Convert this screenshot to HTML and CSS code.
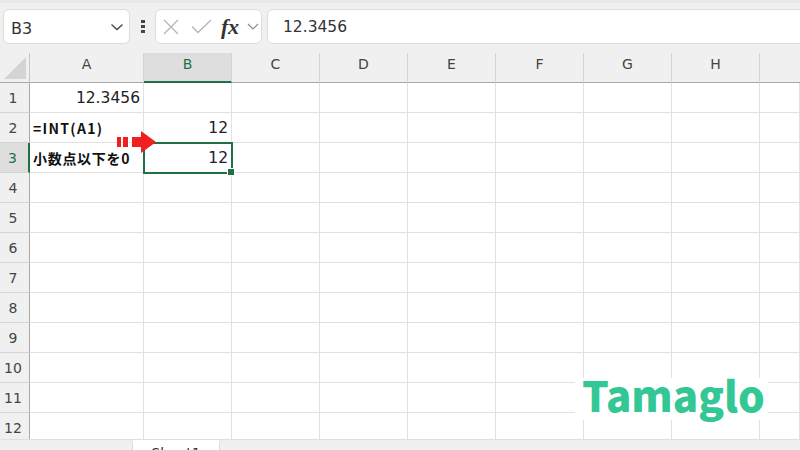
FILE: index.html
```html
<!DOCTYPE html>
<html lang="ja">
<head>
<meta charset="utf-8">
<title>Tamaglo</title>
<link rel="stylesheet" href="styles.css">
</head>
<body>
<div class="app">
  <div class="strip"></div>
  <div class="formula-bar">
    <div class="box name-box"><span class="name">B3</span>
      <svg class="chev" width="14" height="8" viewBox="0 0 14 8"><path d="M1.5 1.5 7 6.5 12.5 1.500" fill="none" stroke="#444" stroke-width="1.3"/></svg>
    </div>
    <div class="grip"><i></i><i></i><i></i></div>
    <div class="box fx-box">
      <svg width="16" height="16" viewBox="0 0 16 16"><path d="M1 1 15 15M15 1 1 15" fill="none" stroke="#b5b5b5" stroke-width="1.3"/></svg>
      <svg class="check" width="21" height="15" viewBox="0 0 21 15"><path d="M1 7.500 7 13.500 20 1" fill="none" stroke="#b5b5b5" stroke-width="1.3"/></svg>
      <span class="fx">fx</span>
      <svg width="12" height="7" viewBox="0 0 12 7"><path d="M1 1 6 6 11 1" fill="none" stroke="#8a8a8a" stroke-width="1.2"/></svg>
    </div>
    <div class="box input-box">12.3456</div>
  </div>
  <div class="sheet">
    <div class="corner"><svg width="22" height="22" viewBox="0 0 22 22"><path d="M22 0V22H0Z" fill="#d4d4d4"/></svg></div>
    <div class="ch">A</div><div class="ch on">B</div><div class="ch">C</div><div class="ch">D</div><div class="ch">E</div><div class="ch">F</div><div class="ch">G</div><div class="ch">H</div><div class="ch end"></div>

    <div class="rh">1</div><div class="c num">12.3456</div><div class="c"></div><div class="c"></div><div class="c"></div><div class="c"></div><div class="c"></div><div class="c"></div><div class="c"></div><div class="c"></div>
    <div class="rh">2</div><div class="c bold formula">=INT(A1)</div><div class="c num">12</div><div class="c"></div><div class="c"></div><div class="c"></div><div class="c"></div><div class="c"></div><div class="c"></div><div class="c"></div>
    <div class="rh on">3</div><div class="c bold">小数点以下を0</div><div class="c num sel">12<b class="handle"></b></div><div class="c"></div><div class="c"></div><div class="c"></div><div class="c"></div><div class="c"></div><div class="c"></div><div class="c"></div>
    <div class="rh">4</div><div class="c"></div><div class="c"></div><div class="c"></div><div class="c"></div><div class="c"></div><div class="c"></div><div class="c"></div><div class="c"></div><div class="c"></div>
    <div class="rh">5</div><div class="c"></div><div class="c"></div><div class="c"></div><div class="c"></div><div class="c"></div><div class="c"></div><div class="c"></div><div class="c"></div><div class="c"></div>
    <div class="rh">6</div><div class="c"></div><div class="c"></div><div class="c"></div><div class="c"></div><div class="c"></div><div class="c"></div><div class="c"></div><div class="c"></div><div class="c"></div>
    <div class="rh">7</div><div class="c"></div><div class="c"></div><div class="c"></div><div class="c"></div><div class="c"></div><div class="c"></div><div class="c"></div><div class="c"></div><div class="c"></div>
    <div class="rh">8</div><div class="c"></div><div class="c"></div><div class="c"></div><div class="c"></div><div class="c"></div><div class="c"></div><div class="c"></div><div class="c"></div><div class="c"></div>
    <div class="rh">9</div><div class="c"></div><div class="c"></div><div class="c"></div><div class="c"></div><div class="c"></div><div class="c"></div><div class="c"></div><div class="c"></div><div class="c"></div>
    <div class="rh">10</div><div class="c"></div><div class="c"></div><div class="c"></div><div class="c"></div><div class="c"></div><div class="c"></div><div class="c"></div><div class="c"></div><div class="c"></div>
    <div class="rh">11</div><div class="c"></div><div class="c"></div><div class="c"></div><div class="c"></div><div class="c"></div><div class="c"></div><div class="c"></div><div class="c"></div><div class="c"></div>
    <div class="rh">12</div><div class="c"></div><div class="c"></div><div class="c"></div><div class="c"></div><div class="c"></div><div class="c"></div><div class="c"></div><div class="c"></div><div class="c"></div>
  </div>
  <div class="tabs">
    <div class="tab-l"></div>
    <div class="tab-active">Sheet1</div>
    <div class="tab-r"></div>
  </div>
  <svg class="arrow" width="40" height="32" viewBox="0 0 40 32"><path d="M0 11H4V21H0ZM6 11H11V21H6ZM15 11H24V5L39 16 24 27V21H15Z" fill="#f02020"/></svg>
  <div class="logo">Tamaglo</div>
</div>
</body>
</html>
```
FILE: styles.css
```css
* { box-sizing: border-box; }
html, body { margin: 0; height: 100%; }
body { background: #fff; overflow: hidden; font-family: "DejaVu Sans", "Noto Sans CJK JP", sans-serif; color: #222; }
.app { position: relative; width: 800px; height: 450px; overflow: hidden; display: flex; flex-direction: column; background: #f0f0f0; }
.strip { height: 3px; background: #e9e9e9; box-shadow: 0 1px 2px rgba(0,0,0,.12); flex: none; }
.formula-bar { flex: none; height: 50px; padding: 6px 0 9px 3px; display: flex; align-items: stretch; background: #f0f0f0; }
.box { background: #fff; border: 1px solid #dcdcdc; border-radius: 6px; display: flex; align-items: center; height: 35px; }
.name-box { width: 127px; padding: 0 5px 0 7px; justify-content: space-between; font-size: 16px; color: #333; }
.name { padding-top: 3px; }
.chev { margin-top: 1px; }
.grip { width: 25px; display: flex; flex-direction: column; align-items: center; justify-content: center; gap: 2px; }
.grip i { width: 4px; height: 3px; background: #444; display: block; }
.fx-box { width: 107px; padding: 0 2px 0 7px; justify-content: space-between; }
.check { margin-left: 3px; }
.fx { font-family: "Liberation Serif", serif; font-style: italic; font-weight: 700; font-size: 22px; line-height: 24px; color: #333; letter-spacing: -.5px; margin-left: 1px; }
.input-box { margin-left: 5px; flex: 1; margin-right: -6px; padding-left: 15px; font-size: 15.500px; color: #333; }
.sheet { flex: none; height: 386px; display: grid; grid-template-columns: 30px 114px repeat(7, 88px) 40px; grid-template-rows: 30px repeat(12, 30px); overflow: hidden; background: #fff; }
.corner { background: #f0f0f0; border-right: 1px solid #c8c8c8; border-bottom: 1px solid #a8a8a8; display: flex; align-items: flex-end; justify-content: flex-end; padding: 0 3px 3px 0; }
.ch { background: #f0f0f0; border-right: 1px solid #d4d4d4; border-bottom: 1px solid #a8a8a8; display: flex; align-items: center; justify-content: center; font-size: 14px; color: #444; padding-bottom: 7px; }
.ch.on { background: #dedede; border-bottom: 2px solid #1f7145; color: #1f7145; }
.ch.end { border-right: 0; }
.rh { background: #f0f0f0; border-right: 1px solid #a8a8a8; border-bottom: 1px solid #d4d4d4; display: flex; align-items: center; justify-content: center; font-size: 14px; color: #444; padding: 1px 3px 0 0; }
.rh.on { background: #dedede; border-right: 2px solid #1f7145; color: #1f7145; }
.c { border-right: 1px solid #e1e1e1; border-bottom: 1px solid #e1e1e1; display: flex; align-items: center; min-width: 0; white-space: nowrap; position: relative; }
.num { justify-content: flex-end; font-size: 15.500px; padding-right: 3px; color: #222; }
.bold { font-family: "Noto Sans CJK JP", sans-serif; font-weight: 700; font-size: 14px; padding-left: 3px; color: #111; letter-spacing: .7px; }
.formula { letter-spacing: 1.300px; }
.sel { outline: 2px solid #1f7145; outline-offset: -1px; z-index: 1; }
.handle { position: absolute; right: -3px; bottom: -3px; width: 6px; height: 6px; background: #1f7145; border: 1px solid #fff; box-sizing: content-box; margin: -1px; }
.tabs { flex: none; height: 11px; display: flex; background: #f0f0f0; overflow: hidden; border-top: 1px solid #e0e0e0; position: absolute; left: 0; right: 0; bottom: 0; }
.tab-l { width: 133px; border-right: 1px solid #dadada; border-radius: 0 5px 0 0; }
.tab-active { width: 86px; background: #fff; margin-top: -1px; text-align: center; font-size: 14px; line-height: 28px; color: #333; }
.tab-r { flex: 1; border-left: 1px solid #dadada; border-radius: 5px 0 0 0; }
.arrow { position: absolute; left: 117px; top: 126px; z-index: 2; }
.logo { position: absolute; left: 575px; top: 378px; width: 193px; height: 42px; padding-left: 7px; background: #fff; font-family: "Noto Sans CJK JP", sans-serif; font-weight: 900; font-size: 42px; line-height: 31px; color: #33c795; z-index: 3; overflow: visible; }
```
